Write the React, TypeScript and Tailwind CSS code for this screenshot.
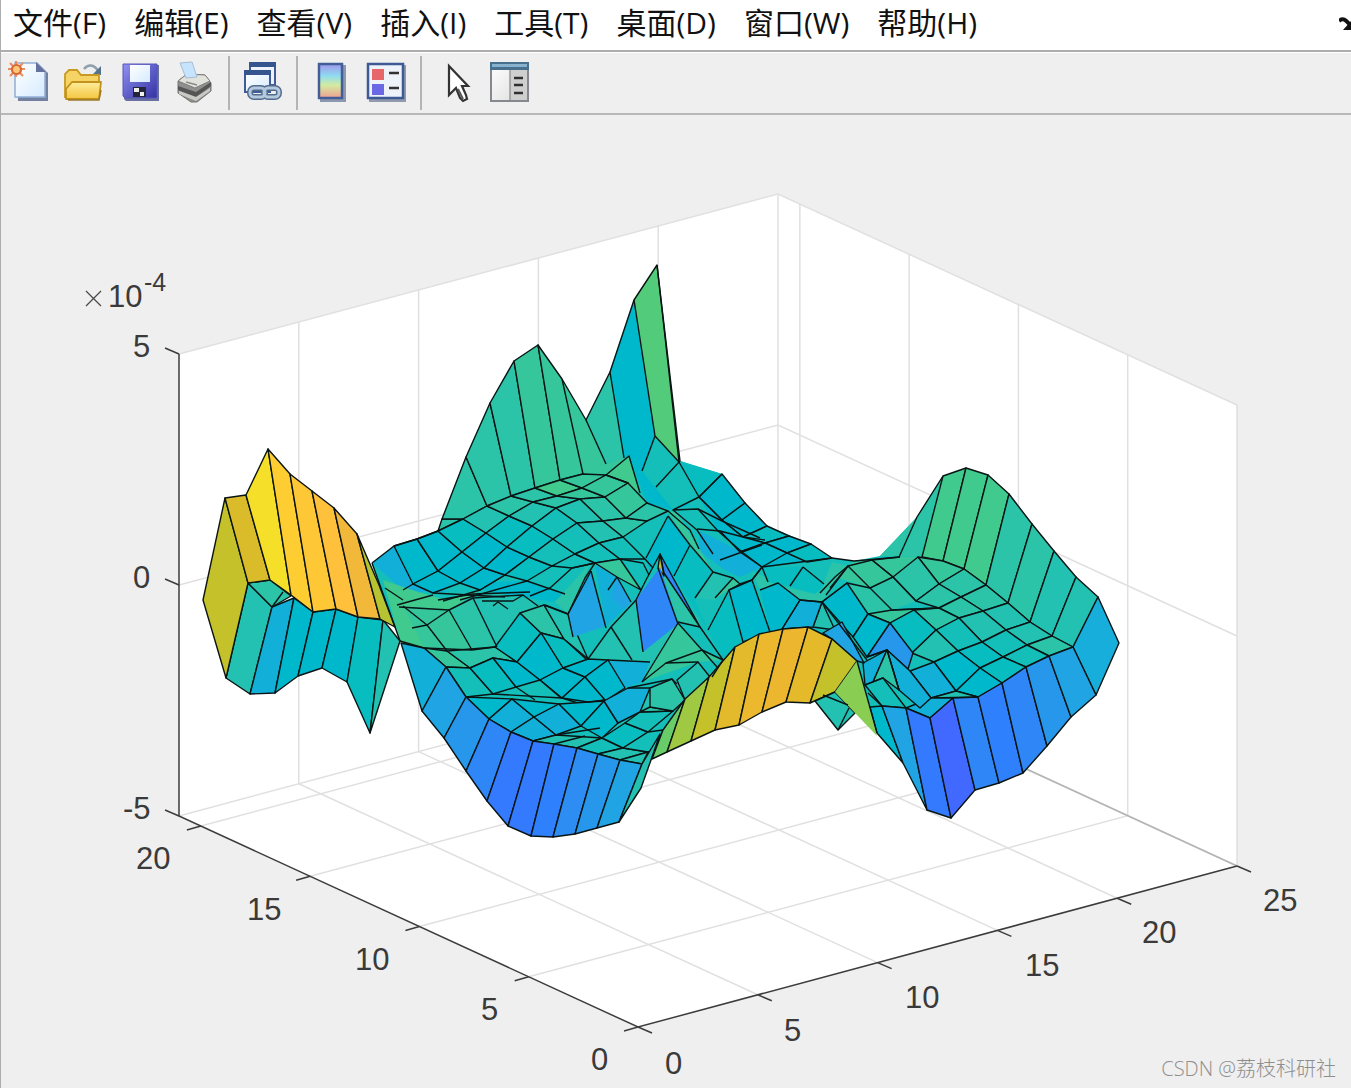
import type { ReactNode } from "react";

type Face = [fill: string, points: string];

const MENUS = ["文件(F)", "编辑(E)", "查看(V)", "插入(I)", "工具(T)", "桌面(D)", "窗口(W)", "帮助(H)"];

const T0 = "#00b8cb";
const T1 = "#08bdc0";
const T2 = "#14bfb9";
const T3 = "#22c1b1";
const T4 = "#2cc4a8";
const T5 = "#35c69c";
const T6 = "#40ca8d";
const B1 = "#12b0d8";
const B2 = "#20a4e3";
const B3 = "#2797eb";
const B4 = "#2e86f7";
const B5 = "#337aff";

/* Overall body of the surface, painted below the facets. */
const BODY =
  "372,563 394,546 417,539 438,531 442,519 466,457 490,403 514,361 538,345 562,379 586,420 610,372 634,300 657,265 680,461 722,474 745,503 767,526 789,536 811,544 832,558 854,561 880,556 917,517 943,476 966,468 988,475 1009,494 1008,603 1073,647 930,718 903,763 877,733 857,661 832,639 808,627 759,634 735,647 709,677 663,730 651,760 641,788 619,822 642,764 533,741 489,719 446,667 400,641";

/* Soft patches without mesh edges. */
const PATCHES: Face[] = [
  [T5, "562,379 586,420 606,464 629,456 640,493 606,475 583,474"],
  [T4, "586,420 610,372 624,458 606,464"],
  [B1, "372,563 394,546 413,584 450,592 405,592"],
  [T6, "383,580 412,590 445,600 480,590 450,610 425,650 400,641"],
  [T5, "403,606 449,610 472,650 424,648"],
  [T4, "449,610 473,598 495,647 472,650"],
  [T3, "473,598 520,590 540,606 520,613 495,647"],
  [T0, "460,583 527,581 565,594 553,602 500,594"],
  [T4, "555,602 591,562 568,614"],
  [T0, "610,372 634,300 655,436 642,471 690,505 673,510 647,503 629,456 624,458"],
  [T2, "655,436 679,462 699,497 673,510 642,471"],
  [T1, "680,461 722,474 699,497"],
  [T0, "722,474 745,503 767,526 811,544 832,558 762,567 718,531 699,497"],
  [B1, "700,531 742,552 762,567 740,577 725,570 698,550"],
  [T2, "673,510 698,509 718,531 697,530"],
  [T0, "668,516 690,545 674,576 664,570 660,554 650,572 646,558"],
  [T1, "690,545 713,572 695,600 708,630 674,576"],
  [T5, "668,512 676,512 697,545 713,572 690,545"],
  [T3, "713,572 733,578 715,600 695,598"],
  [T5, "733,578 740,584 729,590 712,601"],
  [T1, "729,590 743,642 723,660 708,630"],
  [T4, "752,572 790,586 820,593 832,562 848,566 830,590 822,602 800,600 778,583 760,590"],
  [T1, "762,567 803,567 824,584 815,594 768,582"],
  [T0, "760,590 778,583 800,600 782,629 771,633"],
  [T5, "835,577 854,561 900,557 918,557 893,577 870,588"],
  [T4, "880,556 917,517 943,476 922,557"],
  [T4, "870,588 893,577 916,601 892,610"],
  [T4, "847,583 870,588 892,610 868,614"],
  [T3, "588,659 611,627 636,602 642,650 678,624 642,682 610,660"],
  [T5, "642,682 678,623 702,650 723,660 698,662"],
  [T3, "650,688 670,682 685,700 673,711 640,712"],
  [T4, "662,573 698,618 700,627 678,622"],
  [B1, "595,565 617,577 631,602 615,618 606,626"],
  [B2, "617,577 631,602 624,610 611,597"],
  [B1, "608,660 650,662 642,682 625,688"],
  [T6, "606,475 629,456 640,493 628,483"],
];

/* Mesh rows of the raised area at the back left. */
const BACK_ROWS: [number, number][][] = [
  [[394, 546], [413, 584], [433, 593]],
  [[417, 539], [438, 571], [460, 583], [480, 590]],
  [[438, 531], [462, 552], [484, 568], [505, 575], [527, 581]],
  [[463, 519], [486, 533], [507, 547], [529, 557], [552, 566], [572, 568]],
  [[487, 506], [509, 516], [532, 526], [553, 539], [575, 554], [595, 563]],
  [[511, 496], [533, 502], [556, 508], [577, 523], [599, 543], [620, 559]],
  [[535, 488], [557, 496], [580, 499], [603, 521], [623, 537], [645, 559]],
  [[560, 480], [582, 488], [605, 497], [626, 518], [647, 521]],
  [[583, 474], [606, 475], [628, 483], [647, 503], [668, 511]],
];
const BACK_FILLS = [
  [T0, T0],
  [T0, T0, T0],
  [T1, T0, T0, T1],
  [T3, T1, T1, T2, T2],
  [T4, T3, T2, T2, T2],
  [T4, T4, T3, T3, T2],
  [T6, T5, T4, T4],
  [T5, T5, T5, T4],
];

const backFaces: Face[] = BACK_FILLS.flatMap((fills, k) =>
  fills.map((fill, b): Face => {
    const a = BACK_ROWS[k];
    const c = BACK_ROWS[k + 1];
    return [fill, [a[b], c[b], c[b + 1] ?? c[b], a[b + 1]].map((p) => p.join(",")).join(" ")];
  })
);

const FACES: Face[] = [
  /* rear curtain */
  [T4, "438,531 442,519 463,519"],
  [T4, "442,519 466,457 487,506 463,519"],
  [T4, "466,457 490,403 511,496 487,506"],
  [T4, "490,403 514,361 535,488 511,496"],
  [T5, "514,361 538,345 560,480 535,488"],
  [T5, "538,345 562,379 583,474 560,480"],
  ["#52cb7a", "634,300 657,265 679,462 655,436"],
  ...backFaces,
  /* valley at the rear right */
  [T0, "722,474 745,503 722,520 699,497"],
  [T0, "745,503 767,526 743,537 722,520"],
  [T1, "767,526 789,536 765,543 743,537"],
  [T0, "789,536 811,544 787,553 765,543"],
  [T0, "720,531 743,537 765,543 740,552"],
  [T0, "740,552 765,543 787,553 762,567"],
  [T1, "811,544 832,558 807,562 787,553"],
  /* right wing curtain */
  [T6, "943,476 966,468 943,561 922,557"],
  [T6, "966,468 988,475 964,569 943,561"],
  [T6, "988,475 1009,494 986,585 964,569"],
  [T4, "1009,494 1032,524 1008,603 986,585"],
  [T4, "1032,524 1054,551 1030,622 1008,603"],
  [T3, "1054,551 1076,577 1052,636 1030,622"],
  [T3, "1076,577 1098,597 1073,647 1052,636"],
  ["#17aedb", "1098,597 1119,643 1096,695 1073,647"],
  /* right wing top */
  [T5, "918,557 943,561 964,569 939,584"],
  [T4, "918,557 939,584 916,601 893,577"],
  [T4, "964,569 986,585 961,597 939,584"],
  [T4, "939,584 961,597 939,608 916,601"],
  [T4, "986,585 1008,603 983,611 961,597"],
  [T4, "961,597 983,611 959,618 939,608"],
  [T3, "1008,603 1030,622 1006,630 983,611"],
  [T3, "983,611 1006,630 982,642 959,618"],
  [T3, "1030,622 1052,636 1027,645 1006,630"],
  [T2, "1006,630 1027,645 1003,657 982,642"],
  [T4, "1052,636 1073,647 1049,656 1027,645"],
  [T2, "1027,645 1049,656 1026,667 1003,657"],
  [T5, "868,614 892,610 939,608 914,610 890,623"],
  [T4, "914,610 939,608 959,618 936,630"],
  [T1, "890,623 914,610 936,630 912,653"],
  [T2, "936,630 959,618 982,642 958,651"],
  [T3, "912,653 936,630 958,651 934,662"],
  [T1, "958,651 982,642 1003,657 980,668"],
  [T0, "934,662 958,651 980,668 956,691"],
  [T1, "980,668 1003,657 1026,667 1002,683"],
  [B1, "910,671 934,662 956,691 931,698"],
  [T0, "956,691 980,668 1002,683 978,697"],
  [T3, "931,698 956,691 978,697"],
  [B1, "906,708 931,698 953,698 930,718"],
  [T0, "847,583 868,614 853,637 822,602"],
  [T0, "868,614 890,623 867,657 853,637"],
  [B3, "890,623 913,653 908,669 887,650 867,657"],
  [B1, "863,663 887,650 873,682 865,685"],
  [B1, "887,650 910,671 931,698 920,708 899,690"],
  [T4, "887,650 899,690 883,678 873,682"],
  [T2, "865,685 883,678 906,708 882,706"],
  [T3, "822,602 835,630 813,627"],
  [B1, "800,600 822,602 813,627 782,629"],
  [T0, "729,590 752,580 770,632 743,642"],
  [B2, "823,633 842,622 864,663 857,661 832,639"],
  /* right front curtain */
  [T0, "870,707 882,706 903,763 877,733"],
  [B2, "882,706 906,708 927,810 903,763"],
  [B5, "906,708 930,718 951,818 927,810"],
  ["#4269ff", "930,718 953,698 975,790 951,818"],
  [B4, "953,698 978,697 999,783 975,790"],
  ["#2f80fc", "978,697 1002,683 1023,773 999,783"],
  [B4, "1002,683 1026,667 1047,746 1023,773"],
  [B3, "1026,667 1049,656 1071,717 1047,746"],
  [B2, "1049,656 1073,647 1096,695 1071,717"],
  /* front left mesh */
  [T5, "424,648 447,651 470,668 446,667"],
  [T4, "447,651 495,647 517,662 493,658 470,668"],
  [T2, "446,667 470,668 493,694 466,697"],
  [T1, "470,668 493,658 516,687 493,694"],
  [T0, "493,658 517,662 540,680 516,687"],
  [T1, "495,647 520,613 541,633 517,662"],
  [T4, "520,613 544,605 564,639 541,633"],
  [T1, "541,633 564,639 587,660 563,668"],
  [T0, "517,662 541,633 563,668 540,680"],
  [T3, "544,605 568,614 588,659 564,639"],
  [T0, "466,697 512,699 489,719"],
  [B1, "489,719 512,699 534,717 511,732"],
  [T0, "512,699 559,704 534,717"],
  [B1, "511,732 534,717 556,735 533,741"],
  [B1, "534,717 559,704 581,726 556,735"],
  [T0, "540,680 563,668 585,677 562,698"],
  [T0, "588,659 608,660 585,677 563,668"],
  [T0, "585,677 608,660 625,688 605,701"],
  [T0, "562,698 585,677 605,700 581,704"],
  [T0, "559,704 604,701 581,726"],
  [T0, "604,701 618,723 602,738 581,726"],
  [B1, "604,701 628,688 650,688 640,712 618,723"],
  [T3, "533,741 556,735 602,738 577,748"],
  [T2, "577,748 602,738 623,748 598,754"],
  [T1, "602,738 625,723 648,732 623,748"],
  [T2, "625,723 640,712 673,711 648,732"],
  [T4, "640,712 650,707 673,711"],
  [T3, "598,754 623,748 648,752 620,760"],
  [T2, "623,748 648,732 663,730 655,750 648,752"],
  [T3, "620,760 648,752 642,764"],
  [T4, "650,688 672,679 685,700 673,711 650,707"],
  [T3, "677,680 698,662 710,677 685,700"],
  /* spikes in the middle */
  [T5, "595,563 620,559 641,590 617,577"],
  [B4, "660,554 700,627 664,573"],
  ["#c5c12a", "660,554 664,576 658,568"],
  /* front left curtain */
  [B1, "401,643 424,648 446,667 422,711"],
  [B2, "446,667 466,697 444,738 422,711"],
  [B3, "466,697 489,719 466,771 444,738"],
  [B4, "489,719 511,732 487,801 466,771"],
  [B5, "511,732 533,741 508,826 487,801"],
  [B5, "533,741 554,744 531,836 508,826"],
  ["#2f80fc", "554,744 577,748 553,837 531,836"],
  ["#2d8df3", "577,748 598,754 575,834 553,837"],
  [B3, "598,754 620,760 597,828 575,834"],
  [B2, "620,760 642,764 619,822 597,828"],
  [T3, "642,764 660,734 651,760 641,788 619,822"],
  /* yellow front curtain */
  ["#68cc68", "652,759 663,730 685,699 667,752"],
  ["#9fc942", "667,752 685,699 709,677 691,741"],
  ["#c5c12a", "691,741 709,677 735,647 715,730"],
  ["#e3ba2b", "715,730 735,647 759,634 739,725"],
  ["#ebb82e", "739,725 759,634 783,629 762,712"],
  ["#ecb72f", "762,712 783,629 808,627 786,702"],
  ["#e4ba2b", "786,702 808,627 832,639 810,703"],
  ["#c5c12a", "810,703 832,639 857,661 835,692"],
  [T3, "815,701 835,692 855,713 838,730"],
  /* far left wing */
  [T3, "226,678 248,583 272,607 250,694"],
  [B1, "250,694 272,607 294,598 275,693"],
  [T4, "248,583 270,580 291,596 272,607"],
  [T0, "275,693 294,598 313,612 298,676"],
  [T0, "298,676 313,612 336,609 322,668"],
  [T0, "322,668 336,609 358,617 347,682"],
  [T1, "347,682 358,617 383,620 370,733"],
  [T3, "370,733 383,620 400,641"],
  ["#c5c12a", "203,600 225,498 248,583 226,678"],
  ["#dabb2a", "225,498 246,495 270,580 248,583"],
  ["#f6df28", "246,495 268,449 291,595 270,580"],
  ["#fecd31", "268,449 290,474 313,612 291,595"],
  ["#fec735", "290,474 312,491 336,609 313,612"],
  ["#ffc03b", "312,491 334,508 358,617 336,609"],
  ["#f1b83a", "334,508 357,534 380,619 358,617"],
  ["#b8c331", "357,534 379,585 395,627 380,619"],
];

/* Facets whose lower edge fades into the surface without a mesh line. */
const OPEN_FACES: Face[] = [
  [B4, "660,567 636,600 643,652 678,624"],
  [B2, "591,571 568,614 573,637 606,626"],
  ["#89cd52", "835,692 857,661 877,736"],
];

const EDGES = [
  "372,563 394,546", "394,546 417,539 438,531", "400,641 372,563",
  "562,379 586,420 610,372 624,458", "586,420 606,464", "610,372 634,300", "606,475 629,456 640,493", "606,475 628,483",
  "657,265 680,461 656,487", "679,462 699,497 722,520 743,537 765,540", "655,436 642,471",
  "722,474 699,497 673,510 698,509 718,531 742,552 762,567", "698,509 722,521 760,538",
  "668,511 690,530 699,549", "673,510 697,530 713,554", "697,529 720,531", "720,560 742,552 762,545",
  "668,516 690,545 713,572 733,578 740,584 752,580 762,567", "668,516 646,558", "690,545 674,576",
  "713,572 695,598", "733,578 715,598", "740,584 729,590 708,630", "760,590 778,583 800,600 782,629",
  "660,554 646,580 636,600 611,627 588,659", "636,600 643,652", "658,568 678,624", "678,622 700,627 723,660",
  "591,571 568,614 573,637", "591,571 606,628", "595,563 585,578 568,614", "617,577 608,590", "617,577 631,602", "645,559 653,568", "620,559 643,563 649,575",
  "611,627 632,660", "608,660 650,662", "642,682 678,623 702,650 723,660", "642,682 666,663 698,662", "666,663 702,650 717,667", "628,688 672,679 677,684",
  "413,584 403,590", "433,593 505,597", "438,600 473,594 530,592", "443,601 480,590 505,575", "460,600 527,581", "527,581 565,594", "530,596 550,588 572,568", "572,568 595,563",
  "397,605 433,595", "385,588 403,600", "399,607 449,610 473,598 523,595 538,606", "403,606 427,625 447,651", "412,628 427,625 449,610 472,650", "473,598 497,647", "482,601 513,601 523,595", "498,602 493,606", "498,602 508,609",
  "424,648 472,650 495,647", "400,641 424,648", "493,694 562,698 588,702 605,700", "516,687 535,700", "540,680 561,698", "545,605 568,614",
  "556,735 600,728", "554,744 585,736", "762,567 832,558", "803,567 790,586", "803,567 824,584", "762,567 768,582", "752,580 762,567",
  "800,600 822,602 847,583 870,588 893,577", "820,593 835,577 848,566 872,560 900,557", "830,588 848,566 870,588 892,610 939,608", "872,560 893,577", "832,558 854,561 900,557",
  "826,595 848,566", "822,602 867,660", "943,476 917,517 899,557", "872,560 893,577 916,601", "887,650 899,690", "868,693 882,706", "867,657 887,650",
  "838,730 849,708", "823,695 848,705", "857,661 877,733", "712,677 723,660", "283,592 272,607",
];

const X_TICKS = [0, 5, 10, 15, 20, 25].map((v) => ({ v, x: 638 + (599 * v) / 25, y: 1027 - (161 * v) / 25 }));
const Y_TICKS = [0, 5, 10, 15, 20].map((v) => ({ v, x: 638 - (459 * v) / 21, y: 1027 - (211 * v) / 21 }));
const Z_TICKS = [354, 585, 816];

const LABELS: [string, number, number][] = [
  ["5", 133, 357], ["0", 133, 588], ["-5", 123, 819],
  ["20", 136, 869], ["15", 247, 920], ["10", 355, 970], ["5", 481, 1020], ["0", 591, 1070],
  ["0", 665, 1074], ["5", 784, 1041], ["10", 905, 1008], ["15", 1025, 976], ["20", 1142, 943], ["25", 1263, 911],
];

function SurfacePlot() {
  return (
    <svg viewBox="1 115 1350 973" className="block h-auto w-full" role="img" aria-label="Surface plot">
      <polygon points="179,354 778,194 1237,405 1237,866 638,1027 179,816" fill="#fff" />
      <g fill="none" stroke="#e0e0e0" strokeWidth="1.5">
        {X_TICKS.slice(1, 5).map((t) => (
          <polyline key={t.v} points={`${t.x},${t.y} ${t.x - 459},${t.y - 211} ${t.x - 459},${t.y - 673}`} />
        ))}
        {Y_TICKS.slice(1).map((t) => (
          <polyline key={t.v} points={`${t.x},${t.y} ${t.x + 599},${t.y - 161} ${t.x + 599},${t.y - 622}`} />
        ))}
        <polyline points="179,354 778,194 1237,405 1237,866" />
        <polyline points="179,585 778,425 1237,636" />
        <polyline points="179,816 778,655 1237,866" />
        <line x1="778" y1="194" x2="778" y2="655" />
      </g>
      <line x1="1020" y1="766" x2="1237" y2="866" stroke="#b4b4b4" strokeWidth="1.5" />
      <g fill="none" stroke="#3c3c3c" strokeWidth="1.5">
        <polyline points="179,354 179,816 638,1027 1237,866" />
        {Z_TICKS.map((y) => (
          <line key={y} x1="165" y1={y - 6} x2="179" y2={y} />
        ))}
        {Y_TICKS.map((t) => (
          <line key={t.v} x1={t.x - 14} y1={t.y + 4} x2={t.x} y2={t.y} />
        ))}
        {X_TICKS.map((t) => (
          <line key={t.v} x1={t.x} y1={t.y} x2={t.x + 14} y2={t.y + 6} />
        ))}
      </g>

      <polygon points={BODY} fill={T2} />
      {PATCHES.map(([fill, points], i) => (
        <polygon key={i} points={points} fill={fill} />
      ))}
      <g stroke="#0a1414" strokeWidth="1.4" strokeLinejoin="round">
        {FACES.map(([fill, points], i) => (
          <polygon key={i} points={points} fill={fill} />
        ))}
      </g>
      {OPEN_FACES.map(([fill, points], i) => (
        <polygon key={i} points={points} fill={fill} />
      ))}
      <g fill="none" stroke="#0a1414" strokeWidth="1.4" strokeLinejoin="round">
        {EDGES.map((points, i) => (
          <polyline key={i} points={points} />
        ))}
      </g>

      <g fill="#3a3a3a" fontSize="31" fontFamily="'Liberation Sans', Arial, sans-serif">
        {LABELS.map(([text, x, y], i) => (
          <text key={i} x={x} y={y}>{text}</text>
        ))}
        <text x="108" y="307">10</text>
        <text x="144" y="291" fontSize="25">-4</text>
      </g>
      <path d="M86 291l15 15M101 291l-15 15" stroke="#4a4a4a" strokeWidth="1.3" />
    </svg>
  );
}

function ToolButton({ label, x, children }: { label: string; x: number; children: ReactNode }) {
  return (
    <button type="button" aria-label={label} className="h-[44px] w-[42px] shrink-0">
      <svg viewBox={`${x} 60 42 44`} className="block h-[44px] w-[42px] overflow-visible" fill="none">
        {children}
      </svg>
    </button>
  );
}

function Toolbar() {
  return (
    <div role="toolbar" className="flex h-[61px] items-center border-t border-white bg-[#efefef] pl-[7px]">
      <svg className="absolute h-0 w-0" aria-hidden="true">
        <defs>
          <linearGradient id="paper" x1="0" y1="0" x2="1" y2="1"><stop stopColor="#fff" /><stop offset="1" stopColor="#d6ebff" /></linearGradient>
          <linearGradient id="folder" x1="0" y1="0" x2="0" y2="1"><stop stopColor="#ffec9c" /><stop offset="1" stopColor="#f3c640" /></linearGradient>
          <linearGradient id="disk" x1="0" y1="0" x2="1" y2="1"><stop stopColor="#8f92f2" /><stop offset="1" stopColor="#3431a4" /></linearGradient>
          <linearGradient id="bar" x1="0" y1="0" x2="0" y2="1"><stop stopColor="#a195ee" /><stop offset=".35" stopColor="#8fdcf0" /><stop offset=".62" stopColor="#d2eca0" /><stop offset="1" stopColor="#f2a092" /></linearGradient>
          <linearGradient id="panel" x1="0" y1="0" x2="1" y2="1"><stop stopColor="#fff" /><stop offset="1" stopColor="#dcdcdc" /></linearGradient>
        </defs>
      </svg>
      <div className="flex gap-3">
        <ToolButton label="新建图窗" x={8}>
          <path d="M17 64h22l9 8v28H18z" fill="#74809f" />
          <path d="M15 62h22l8 8v26H15z" fill="url(#paper)" stroke="#8eb0d8" strokeWidth="1.5" />
          <path d="M36 61v10h10z" fill="#66719c" />
          <path d="M16 60v16M8 68h17M10 62l13 13M23 62L10 75" stroke="#ed8c5c" strokeWidth="2.2" />
          <circle cx="16.5" cy="68.5" r="4.5" fill="#ffc879" stroke="#d96836" strokeWidth="2.2" />
        </ToolButton>
        <ToolButton label="打开文件" x={62}>
          <path d="M84 68c4-5 10-5 14 2" stroke="#8d9ead" strokeWidth="2.5" />
          <path d="M101 65v9h-9z" fill="#56738d" />
          <path d="M65 97V73l4-4h8l4 5h18v8" fill="#f5d365" stroke="#c99a21" strokeWidth="1.8" />
          <path d="M66 98V88l6-7h29l-2 17z" fill="url(#folder)" stroke="#c3921b" strokeWidth="1.8" strokeLinejoin="round" />
          <path d="M68 99h31l2-10" stroke="#9b7a2c" strokeWidth="1.5" />
        </ToolButton>
        <ToolButton label="保存图窗" x={116}>
          <path d="M124 64h35v36h-33l-2-2z" fill="#6870a0" />
          <path d="M123 63h34v34h-32l-2-2z" fill="url(#disk)" stroke="#5655b8" />
          <path d="M130 64h20v17h-20z" fill="url(#paper)" />
          <path d="M133 86h13v10h-13z" fill="#24243a" />
          <path d="M134 87h5v4h-5zM140 91h4v4h-4z" fill="#f0f0ea" />
        </ToolButton>
        <ToolButton label="打印图窗" x={170}>
          <path d="M178 80l9-7 18 1 6 8v8l-14 11h-6l-13-9z" fill="#8f8f8d" stroke="#737371" />
          <path d="M178 80l9-7 18 1 5 6-15 7z" fill="#e2e2dd" stroke="#7d7d7a" />
          <path d="M180 62l12-1 5 15-11 1z" fill="#c7e4ff" stroke="#a7bdd2" />
          <path d="M178 85l18 6 15-10v4l-15 11-18-7z" fill="#555" />
          <path d="M179 90l17 6 14-9v3l-14 10-17-7z" fill="#c9c9c6" />
          <path d="M186 81l11 3" stroke="#8a8a88" strokeWidth="1.5" />
        </ToolButton>
      </div>
      <div className="ml-4 flex h-[54px] items-center border-l-2 border-[#b4b4b4] pl-3">
        <ToolButton label="链接绘图" x={242}>
          <path d="M250 63h25v21h-25z" fill="#eef3fb" stroke="#3f5c96" strokeWidth="2" />
          <path d="M249 61h27v5h-27z" fill="#35558f" />
          <path d="M245 71h25v20h-25z" fill="url(#paper)" stroke="#3f5c96" strokeWidth="2" />
          <path d="M244 69h27v5h-27z" fill="#35558f" />
          <g stroke="#526c8e" strokeWidth="6"><rect x="250" y="87" width="15" height="9" rx="4" /><rect x="264" y="87" width="15" height="9" rx="4" /></g>
          <g stroke="#b4c8de" strokeWidth="3"><rect x="250" y="87" width="15" height="9" rx="4" /><rect x="264" y="87" width="15" height="9" rx="4" /></g>
        </ToolButton>
      </div>
      <div className="ml-3 flex h-[54px] items-center gap-3 border-l-2 border-[#b4b4b4] pl-3">
        <ToolButton label="插入颜色栏" x={311}>
          <path d="M321 64h26v37h-26z" fill="#8d98ae" />
          <path d="M320 63h23v34h-23z" fill="url(#bar)" stroke="#425e97" strokeWidth="2.5" />
        </ToolButton>
        <ToolButton label="插入图例" x={364}>
          <path d="M369 64h37v37h-37z" fill="#929bae" />
          <path d="M368 63h35v34h-35z" fill="#eef2f9" stroke="#3e5a94" strokeWidth="2.5" />
          <path d="M372 68h12v11h-12z" fill="#e66669" />
          <path d="M372 83h12v11h-12z" fill="#6b68e6" />
          <path d="M389 72h10M389 87h10" stroke="#333" strokeWidth="2.5" />
        </ToolButton>
      </div>
      <div className="ml-[14px] flex h-[54px] items-center gap-3 border-l-2 border-[#b4b4b4] pl-3">
        <ToolButton label="编辑绘图" x={433}>
          <path d="M448 65v29l7-7 4 10 3 3 4-2-1-4-4-9h6z" fill="#fff" stroke="#333" strokeWidth="2.2" />
          <path d="M457 88l5 10" stroke="#555" strokeWidth="2" />
        </ToolButton>
        <ToolButton label="属性检查器" x={486}>
          <path d="M489 62h37v38h-37z" fill="url(#panel)" stroke="#85888c" strokeWidth="2" />
          <path d="M488 61h39v8h-39z" fill="#47708f" />
          <path d="M490 63h35v3h-35z" fill="#86b2ce" />
          <path d="M508 69h17v30h-17z" fill="#cfcfcf" />
          <path d="M508 69v30" stroke="#999" strokeWidth="1.5" />
          <path d="M512 77h9M512 84h9M512 92h9" stroke="#303030" strokeWidth="2.5" />
        </ToolButton>
      </div>
    </div>
  );
}

export default function App() {
  return (
    <main className="relative min-h-screen overflow-hidden border-l border-[#adadad] bg-[#efefef]">
      <header className="flex h-[52px] items-start justify-between border-b-2 border-[#adadad] bg-white">
        <nav className="flex gap-7 pl-[12px] font-['Open_Sans','Noto_Sans_CJK_SC',sans-serif] text-[30px] leading-[46px] text-[#111]">
          {MENUS.map((menu) => (
            <button key={menu} type="button" className="whitespace-nowrap">{menu}</button>
          ))}
        </nav>
        <button type="button" aria-label="停靠" className="mt-[17px]">
          <svg viewBox="0 0 12 14" className="block h-[14px] w-[12px]" fill="none">
            <path d="M0 4C4 0 7 3 12 9" stroke="#111" strokeWidth="4" />
            <path d="M12 4v9H4z" fill="#111" />
          </svg>
        </button>
      </header>
      <Toolbar />
      <div className="border-t-2 border-[#b7b9b8]">
        <SurfacePlot />
      </div>
      <p className="absolute right-[15px] bottom-[5px] font-['Open_Sans','Noto_Sans_CJK_SC',sans-serif] text-[20px] leading-[28px] font-light text-[#8e8e8e]">
        CSDN @荔枝科研社
      </p>
    </main>
  );
}
